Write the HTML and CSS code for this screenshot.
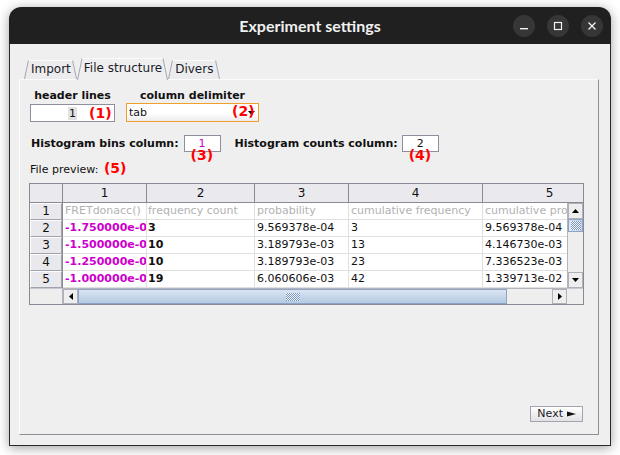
FILE: index.html
```html
<!DOCTYPE html>
<html>
<head>
<meta charset="utf-8">
<link rel="stylesheet" href="styles.css">
</head>
<body>
<div class="window">
  <div class="titlebar">
    <div class="title">Experiment settings</div>
    <div class="wbtns">
      <span class="wbtn"><svg width="10" height="10" viewBox="0 0 10 10"><rect x="1" y="7" width="8" height="1.4" fill="#f2f2f2"/></svg></span>
      <span class="wbtn"><svg width="10" height="10" viewBox="0 0 10 10"><rect x="1.5" y="1.5" width="7" height="7" fill="none" stroke="#f2f2f2" stroke-width="1.2"/></svg></span>
      <span class="wbtn"><svg width="10" height="10" viewBox="0 0 10 10"><path d="M1.5 1.5 L8.5 8.5 M8.5 1.5 L1.5 8.5" stroke="#f2f2f2" stroke-width="1.3"/></svg></span>
    </div>
  </div>
  <div class="wbody">
    <div class="tabs">
      <div class="tab"><span>Import</span></div>
      <div class="tab active"><span>File structure</span></div>
      <div class="tab"><span>Divers</span></div>
    </div>
    <div class="panel">
      <div class="row1">
        <div class="field f-header">
          <div class="flabel">header lines</div>
          <div class="textbox"><span class="sel">1</span><span class="anno a1">(1)</span></div>
        </div>
        <div class="field f-delim">
          <div class="flabel">column delimiter</div>
          <div class="combo"><span class="combo-text">tab</span><svg class="combo-arrow" width="7" height="4" viewBox="0 0 7 4"><polygon points="0,0 7,0 3.5,4" fill="#000"/></svg><span class="anno a2">(2)</span></div>
        </div>
      </div>
      <div class="row2">
        <span class="blabel">Histogram bins column:</span>
        <div class="smallbox magenta">1<span class="anno a3">(3)</span></div>
        <span class="blabel second">Histogram counts column:</span>
        <div class="smallbox">2<span class="anno a4">(4)</span></div>
      </div>
      <div class="preview-label">File preview: <span class="anno-inline">(5)</span></div>
      <div class="tbl">
        <div class="corner"></div>
        <div class="colheads">
          <div class="ch w1">1</div>
          <div class="ch w2">2</div>
          <div class="ch w3">3</div>
          <div class="ch w4">4</div>
          <div class="ch w5">5</div>
        </div>
        <div class="rowheads">
          <div class="rh">1</div>
          <div class="rh">2</div>
          <div class="rh">3</div>
          <div class="rh">4</div>
          <div class="rh">5</div>
        </div>
        <div class="viewport">
          <div class="drow gray">
            <div class="c w1">FRETdonacc()</div>
            <div class="c w2">frequency count</div>
            <div class="c w3">probability</div>
            <div class="c w4">cumulative frequency</div>
            <div class="c w5">cumulative probability</div>
          </div>
          <div class="drow">
            <div class="c w1 mag">-1.750000e-01</div>
            <div class="c w2 bold">3</div>
            <div class="c w3">9.569378e-04</div>
            <div class="c w4">3</div>
            <div class="c w5">9.569378e-04</div>
          </div>
          <div class="drow">
            <div class="c w1 mag">-1.500000e-01</div>
            <div class="c w2 bold">10</div>
            <div class="c w3">3.189793e-03</div>
            <div class="c w4">13</div>
            <div class="c w5">4.146730e-03</div>
          </div>
          <div class="drow">
            <div class="c w1 mag">-1.250000e-01</div>
            <div class="c w2 bold">10</div>
            <div class="c w3">3.189793e-03</div>
            <div class="c w4">23</div>
            <div class="c w5">7.336523e-03</div>
          </div>
          <div class="drow">
            <div class="c w1 mag">-1.000000e-01</div>
            <div class="c w2 bold">19</div>
            <div class="c w3">6.060606e-03</div>
            <div class="c w4">42</div>
            <div class="c w5">1.339713e-02</div>
          </div>
        </div>
        <div class="vscroll">
          <div class="sbtn"><svg width="7" height="4" viewBox="0 0 7 4"><polygon points="0,4 7,4 3.5,0" fill="#000"/></svg></div>
          <div class="vthumb"><span class="grip vgrip"></span></div>
          <div class="vtrack"></div>
          <div class="sbtn"><svg width="7" height="4" viewBox="0 0 7 4"><polygon points="0,0 7,0 3.5,4" fill="#000"/></svg></div>
        </div>
        <div class="corner-bl"></div>
        <div class="hscroll">
          <div class="hbtn"><svg width="4" height="7" viewBox="0 0 4 7"><polygon points="4,0 4,7 0,3.5" fill="#000"/></svg></div>
          <div class="hthumb"><span class="grip hgrip"></span></div>
          <div class="htrack"></div>
          <div class="hbtn"><svg width="4" height="7" viewBox="0 0 4 7"><polygon points="0,0 0,7 4,3.5" fill="#000"/></svg></div>
        </div>
        <div class="corner-br"></div>
      </div>
      <div class="footer">
        <button class="next">Next <svg width="9" height="6" viewBox="0 0 9 6"><polygon points="0,0.5 9,3 0,5.5" fill="#111"/></svg></button>
      </div>
    </div>
  </div>
</div>
</body>
</html>
```

FILE: styles.css
```css
* { box-sizing: border-box; }
html, body { margin: 0; padding: 0; }
body {
  width: 620px;
  height: 455px;
  overflow: hidden;
  background: #ffffff;
  font-family: "DejaVu Sans", sans-serif;
  font-size: 11px;
  color: #111;
}
.window {
  margin: 7px 0 0 9px;
  width: 602px;
  height: 439px;
  border-radius: 12px 12px 0 0;
  box-shadow: 0 2px 12px rgba(0,0,0,0.38);
  display: flex;
  flex-direction: column;
}
.titlebar {
  height: 37px;
  background: #202020;
  border-radius: 12px 12px 0 0;
  display: grid;
  align-items: center;
}
.title {
  grid-area: 1 / 1;
  justify-self: center;
  font-family: "Lato", "DejaVu Sans", sans-serif;
  font-weight: 700;
  font-size: 16px;
  color: #f0f0f0;
}
.wbtns {
  grid-area: 1 / 1;
  justify-self: end;
  margin-right: 8px;
  display: flex;
  gap: 12px;
}
.wbtn {
  width: 22px;
  height: 22px;
  border-radius: 50%;
  background: #363636;
  display: flex;
  align-items: center;
  justify-content: center;
}
.wbody {
  flex: 1;
  background: #efefef;
  border: 1px solid #2a2a2a;
  border-top: none;
  padding: 14px 11px 10px 9px;
  display: flex;
  flex-direction: column;
}
.tabs {
  display: flex;
  align-items: flex-end;
  height: 21px;
  padding-left: 5px;
}
.tab {
  position: relative;
  z-index: 1;
  height: 19px;
  padding: 0 6px 0 7px;
  font-size: 12px;
  line-height: 19px;
  color: #1c1c2a;
}
.tab.active {
  z-index: 3;
  height: 21px;
  line-height: 20px;
}
.tab::before, .tab::after {
  content: "";
  position: absolute;
  top: 0;
  bottom: 0;
  width: 60%;
  background: #ececee;
  border-top: 1px solid #fbfbfb;
  z-index: -1;
}
.tab::before {
  left: 0;
  border-left: 1px solid #a6a6b2;
  transform: skewX(-12deg);
  transform-origin: bottom left;
}
.tab::after {
  right: 0;
  border-right: 1px solid #a6a6b2;
  transform: skewX(12deg);
  transform-origin: bottom right;
}
.tab.active::before, .tab.active::after { background: #efefef; bottom: -1px; }
.panel {
  flex: 1;
  background: #efefef;
  border: 1px solid;
  border-color: #fbfbfb #8e8e98 #8e8e98 #fbfbfb;
  padding: 9px 0 0 10px;
  display: flex;
  flex-direction: column;
}
.row1 {
  display: flex;
  align-items: flex-start;
  gap: 11px;
}
.field {
  display: flex;
  flex-direction: column;
  align-items: center;
}
.flabel {
  font-weight: 700;
  font-size: 11px;
  line-height: 14px;
  height: 14px;
  color: #111;
}
.f-header { width: 85px; }
.f-delim { width: 133px; }
.textbox {
  position: relative;
  margin-top: 1px;
  width: 85px;
  height: 18px;
  background: #fff;
  border: 1px solid #8e8e9e;
  display: flex;
  align-items: center;
  justify-content: center;
}
.sel {
  background: #e2e2e2;
  line-height: 13px;
  padding: 0 1px;
  font-size: 11px;
}
.combo {
  position: relative;
  width: 133px;
  height: 19px;
  background: linear-gradient(#ffffff 55%, #ececec);
  border: 1px solid #f0a02a;
  display: flex;
  align-items: center;
  padding-left: 2px;
}
.combo-text { font-size: 11px; }
.combo-arrow { margin-left: auto; margin-right: 3px; }
.anno {
  position: absolute;
  font-weight: 700;
  font-size: 14px;
  line-height: 16px;
  color: #ff0000;
  white-space: nowrap;
}
.a1 { left: 58px; top: 0px; }
.a2 { left: 105px; top: -1px; }
.a3 { left: 6px; top: 11px; }
.a4 { left: 6px; top: 11px; }
.anno-inline {
  font-weight: 700;
  font-size: 14px;
  color: #ff0000;
  margin-left: 2px;
}
.row2 {
  display: flex;
  align-items: center;
  height: 17px;
  margin-top: 13px;
}
.blabel {
  font-weight: 700;
  font-size: 11px;
  margin-left: 1px;
  margin-right: 5px;
}
.blabel.second { margin-left: 14px; margin-right: 4px; }
.smallbox {
  position: relative;
  width: 37px;
  height: 17px;
  background: #fff;
  border: 1px solid #8e8e9e;
  text-align: center;
  line-height: 15px;
  font-size: 11px;
}
.smallbox.magenta { color: #cc00cc; }
.preview-label {
  margin-top: 10px;
  height: 13px;
  line-height: 13px;
  font-size: 11px;
  white-space: nowrap;
}
.tbl {
  margin: 8px 0 0 -1px;
  width: 555px;
  height: 122px;
  border: 1px solid #8a8a94;
  background: #fff;
  display: grid;
  grid-template-columns: 33px 504px 16px;
  grid-template-rows: 19px 85px 16px;
  overflow: hidden;
}
.corner {
  background: #e9e9ee;
  border-right: 1px solid #8a8a94;
  border-bottom: 1px solid #8a8a94;
}
.colheads {
  grid-column: 2 / 4;
  display: flex;
  overflow: hidden;
  background: #e9e9ee;
  border-bottom: 1px solid #8a8a94;
}
.ch {
  flex: none;
  text-align: center;
  font-size: 12px;
  line-height: 18px;
  border-right: 1px solid #8a8a94;
  color: #111;
}
.w1 { width: 84px; }
.w2 { width: 108px; }
.w3 { width: 94px; }
.w4 { width: 134px; }
.w5 { width: 134px; }
.rowheads {
  background: #f4f4f6;
  border-right: 1px solid #8a8a94;
  display: flex;
  flex-direction: column;
}
.rh {
  height: 17px;
  flex: none;
  text-align: center;
  font-size: 12px;
  line-height: 15px;
  background: #e8e8ed;
  border: 1px solid;
  border-color: #fdfdfd #a2a2ac #a2a2ac #fdfdfd;
}
.viewport {
  overflow: hidden;
  background: #fff;
}
.drow {
  display: flex;
  height: 17px;
  border-bottom: 1px solid #e0e0e0;
}
.c {
  flex: none;
  height: 16px;
  line-height: 16px;
  padding-left: 2px;
  font-size: 11px;
  white-space: nowrap;
  overflow: hidden;
  text-overflow: clip;
  border-right: 1px solid #e0e0e0;
  color: #111;
}
.c.w2 { padding-left: 1px; }
.gray .c { color: #b2b2b2; }
.mag { color: #cc00cc !important; font-weight: 700; }
.bold { font-weight: 700; }
.vscroll {
  display: flex;
  flex-direction: column;
  background: #eeeeee;
  border-left: 1px solid #b4b4bc;
}
.sbtn, .hbtn {
  flex: none;
  background: #eeeeee;
  border: 1px solid #b0b0b8;
  display: flex;
  align-items: center;
  justify-content: center;
}
.sbtn { height: 16px; }
.hbtn { width: 15px; }
.vthumb, .hthumb {
  flex: none;
  border: 1px solid #8ea4c6;
  display: flex;
  align-items: center;
  justify-content: center;
}
.vthumb {
  height: 13px;
  background: linear-gradient(90deg, #dce6f2, #bccfe6);
}
.hthumb {
  width: 429px;
  background: linear-gradient(#d9e4f1, #b6cae3);
}
.vtrack, .htrack { flex: 1; background: #eeeeee; }
.grip {
  display: block;
  background-image: conic-gradient(#5f7fb8 25%, #ffffff 0 50%, #5f7fb8 0 75%, #ffffff 0);
  background-size: 2px 2px;
  opacity: 0.75;
}
.vgrip { width: 10px; height: 9px; }
.hgrip { width: 14px; height: 8px; }
.corner-bl {
  background: #eeeeee;
  border-right: 1px solid #b4b4bc;
  border-top: 1px solid #c8c8d0;
}
.hscroll {
  display: flex;
  background: #eeeeee;
  border-top: 1px solid #b4b4bc;
}
.corner-br {
  background: #eeeeee;
  border-top: 1px solid #c8c8d0;
}
.footer {
  margin-top: auto;
  display: flex;
  justify-content: flex-end;
  padding: 0 15px 12px 0;
}
.next {
  height: 16px;
  padding: 0 6px;
  margin: 0;
  border: 1px solid #a4a4ae;
  background: linear-gradient(#ffffff, #e2e2e6);
  font-family: "DejaVu Sans", sans-serif;
  font-size: 11px;
  line-height: 14px;
  color: #1a1a2a;
  display: flex;
  align-items: center;
  gap: 4px;
}
```
